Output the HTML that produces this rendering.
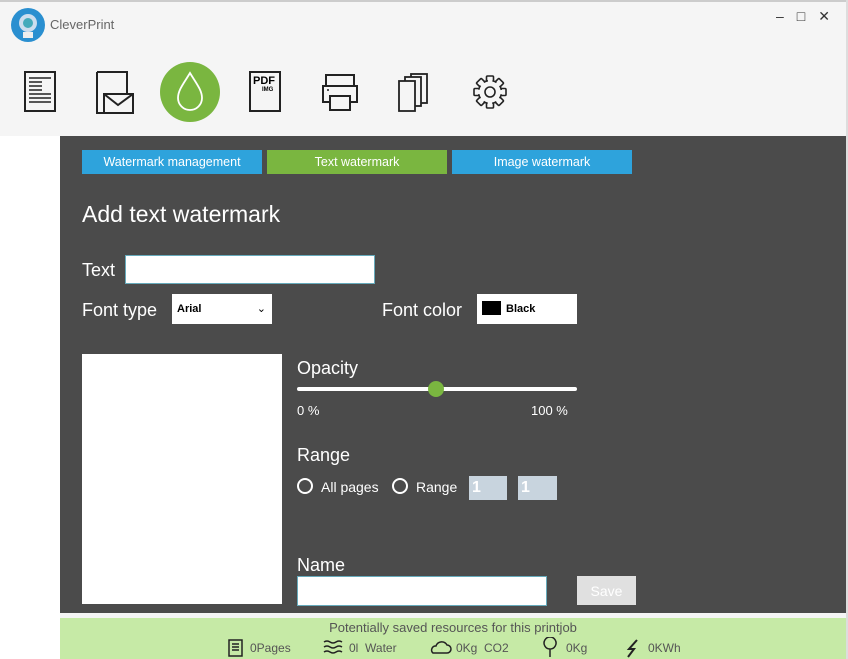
<html><head><style>
body{margin:0;width:848px;height:659px;background:#f5f5f5;font-family:"Liberation Sans",sans-serif;position:relative;overflow:hidden}
.a{position:absolute}
.w{color:#fff}
.f{position:absolute;top:641px;font-size:12px;color:#555;white-space:pre}
</style></head><body>
<div class="a" style="left:0;top:0;width:848px;height:2px;background:#ccc"></div>
<div class="a" style="left:846px;top:0;width:2px;height:659px;background:#ddd"></div>
<svg class="a" style="left:10px;top:7px" width="36" height="36"><circle cx="18" cy="18" r="17" fill="#2a8fd0"/><circle cx="18" cy="16" r="9" fill="#cde" /><circle cx="18" cy="16" r="5" fill="#4ab"/><rect x="13" y="25" width="10" height="6" fill="#eee"/></svg>
<div class="a" style="left:50px;top:17px;font-size:13px;color:#666">CleverPrint</div>
<div class="a" style="left:776px;top:8px;font-size:14px;color:#333;letter-spacing:13px">–□✕</div>
<svg class="a" style="left:0;top:55px" width="520" height="80" fill="none" stroke="#222" stroke-width="2">
<rect x="25" y="17" width="30" height="39"/><path d="M29 23h22M29 27h13M29 31h13M29 35h13M29 39h22M29 43h22M29 47h22" stroke-width="1.6"/>
<path d="M97 17v41h10M97 17h30v21" /><rect x="104" y="39" width="29" height="19" fill="#f5f5f5"/><path d="M104 39l14 11 15-11"/>
<circle cx="190" cy="37" r="30" fill="#7ab640" stroke="none"/><path d="M190 18c-6 10-12 17-12 25a12 12 0 0 0 24 0c0-8-6-15-12-25z" stroke="#fff" stroke-width="1.8"/>
<rect x="250" y="17" width="30" height="39"/>
<rect x="326" y="20" width="28" height="12" fill="#f5f5f5"/>
<rect x="323" y="31" width="34" height="16" fill="#f5f5f5"/>
<rect x="330" y="41" width="20" height="14" fill="#f5f5f5"/>
<circle cx="328" cy="35" r="1" fill="#222" stroke="none"/>
<rect x="411" y="19" width="16" height="29" fill="#f5f5f5" stroke-width="1.8"/>
<rect x="405" y="22" width="16" height="29" fill="#f5f5f5" stroke-width="1.8"/>
<rect x="399" y="26" width="16" height="30" fill="#f5f5f5" stroke-width="1.8"/>
<g transform="translate(490 37)" stroke-width="1.6" fill="#f5f5f5">
<rect x="-3.5" y="-16" width="7" height="6" rx="1"/>
<rect x="-3.5" y="-16" width="7" height="6" rx="1" transform="rotate(45)"/>
<rect x="-3.5" y="-16" width="7" height="6" rx="1" transform="rotate(90)"/>
<rect x="-3.5" y="-16" width="7" height="6" rx="1" transform="rotate(135)"/>
<rect x="-3.5" y="-16" width="7" height="6" rx="1" transform="rotate(180)"/>
<rect x="-3.5" y="-16" width="7" height="6" rx="1" transform="rotate(225)"/>
<rect x="-3.5" y="-16" width="7" height="6" rx="1" transform="rotate(270)"/>
<rect x="-3.5" y="-16" width="7" height="6" rx="1" transform="rotate(315)"/>
<circle r="11.5" stroke="none"/>
<circle r="11.5" stroke-dasharray="4.4 4.6" stroke-dashoffset="6.7"/>
<circle r="5"/>
</g>
</svg>
<div class="a" style="left:253px;top:75px;font-size:11px;font-weight:bold">PDF</div>
<div class="a" style="left:262px;top:87px;font-size:6px;font-weight:bold">IMG</div>
<div class="a" style="left:0;top:136px;width:60px;height:523px;background:#fff"></div>
<div class="a" style="left:60px;top:136px;width:786px;height:477px;background:#4b4b4b"></div>
<div class="a w" style="left:82px;top:150px;width:180px;height:24px;background:#2ea3dc;font-size:12.5px;text-align:center;line-height:24px">Watermark management</div>
<div class="a w" style="left:267px;top:150px;width:180px;height:24px;background:#7ab640;font-size:12.5px;text-align:center;line-height:24px">Text watermark</div>
<div class="a w" style="left:452px;top:150px;width:180px;height:24px;background:#2ea3dc;font-size:12.5px;text-align:center;line-height:24px">Image watermark</div>
<div class="a w" style="left:82px;top:201px;font-size:23px">Add text watermark</div>
<div class="a w" style="left:82px;top:260px;font-size:18px">Text</div>
<div class="a" style="left:125px;top:255px;width:248px;height:27px;background:#fff;border:1px solid #6ab"></div>
<div class="a w" style="left:82px;top:300px;font-size:18px">Font type</div>
<div class="a" style="left:172px;top:294px;width:100px;height:30px;background:#fff;font-size:11px;font-weight:bold;line-height:30px;text-indent:5px">Arial<span style="position:absolute;right:6px;font-weight:normal">⌄</span></div>
<div class="a w" style="left:382px;top:300px;font-size:18px">Font color</div>
<div class="a" style="left:477px;top:294px;width:100px;height:30px;background:#fff;font-size:11px;font-weight:bold;line-height:30px"><span style="display:inline-block;width:19px;height:14px;background:#000;margin:0 5px;vertical-align:-3px"></span>Black</div>
<div class="a" style="left:82px;top:354px;width:200px;height:250px;background:#fff"></div>
<div class="a w" style="left:297px;top:358px;font-size:18px">Opacity</div>
<div class="a" style="left:297px;top:387px;width:280px;height:4px;background:#fff;border-radius:2px"></div>
<div class="a" style="left:428px;top:381px;width:16px;height:16px;background:#7ab640;border-radius:50%"></div>
<div class="a w" style="left:297px;top:403px;font-size:13px">0 %</div>
<div class="a w" style="left:531px;top:403px;font-size:13px">100 %</div>
<div class="a w" style="left:297px;top:445px;font-size:18px">Range</div>
<div class="a" style="left:297px;top:478px;width:12px;height:12px;border:2px solid #fff;border-radius:50%"></div>
<div class="a w" style="left:321px;top:479px;font-size:14px">All pages</div>
<div class="a" style="left:392px;top:478px;width:12px;height:12px;border:2px solid #fff;border-radius:50%"></div>
<div class="a w" style="left:416px;top:479px;font-size:14px">Range</div>
<div class="a" style="left:469px;top:476px;width:38px;height:24px;background:#c8d4de;color:#fff;font-size:16px;font-weight:bold;line-height:24px;text-indent:3px">1</div>
<div class="a" style="left:518px;top:476px;width:39px;height:24px;background:#c8d4de;color:#fff;font-size:16px;font-weight:bold;line-height:24px;text-indent:3px">1</div>
<div class="a w" style="left:297px;top:555px;font-size:18px">Name</div>
<div class="a" style="left:297px;top:576px;width:248px;height:28px;background:#fff;border:1px solid #6ab"></div>
<div class="a" style="left:577px;top:576px;width:59px;height:29px;background:#e0e0e0;color:#fff;font-size:14px;text-align:center;line-height:30px">Save</div>
<div class="a" style="left:60px;top:618px;width:786px;height:41px;background:#c6eaa6"></div>
<div class="a" style="left:60px;top:620px;width:786px;text-align:center;font-size:13px;color:#555">Potentially saved resources for this printjob</div>
<svg class="a" style="left:225px;top:637px" width="420" height="22" fill="none" stroke="#222" stroke-width="1.5">
<rect x="4" y="3" width="13" height="16"/><path d="M7 7h7M7 10h7M7 13h7"/>
<path d="M99 5q3-2 6 0t6 0 6 0M99 10q3-2 6 0t6 0 6 0M99 15q3-2 6 0t6 0 6 0"/>
<path d="M208 16h14a4 4 0 0 0 0-8 6 6 0 0 0-11 1 4 4 0 0 0-3 7z"/>
<path d="M325 20v-8M325 12a6 6 0 1 1 0.1 0"/>
<path d="M412 3l-8 9h5l-6 8" stroke-width="2"/>
</svg>
<div class="f" style="left:250px">0Pages</div>
<div class="f" style="left:349px">0l  Water</div>
<div class="f" style="left:456px">0Kg  CO2</div>
<div class="f" style="left:566px">0Kg</div>
<div class="f" style="left:648px">0KWh</div>
</body></html>
